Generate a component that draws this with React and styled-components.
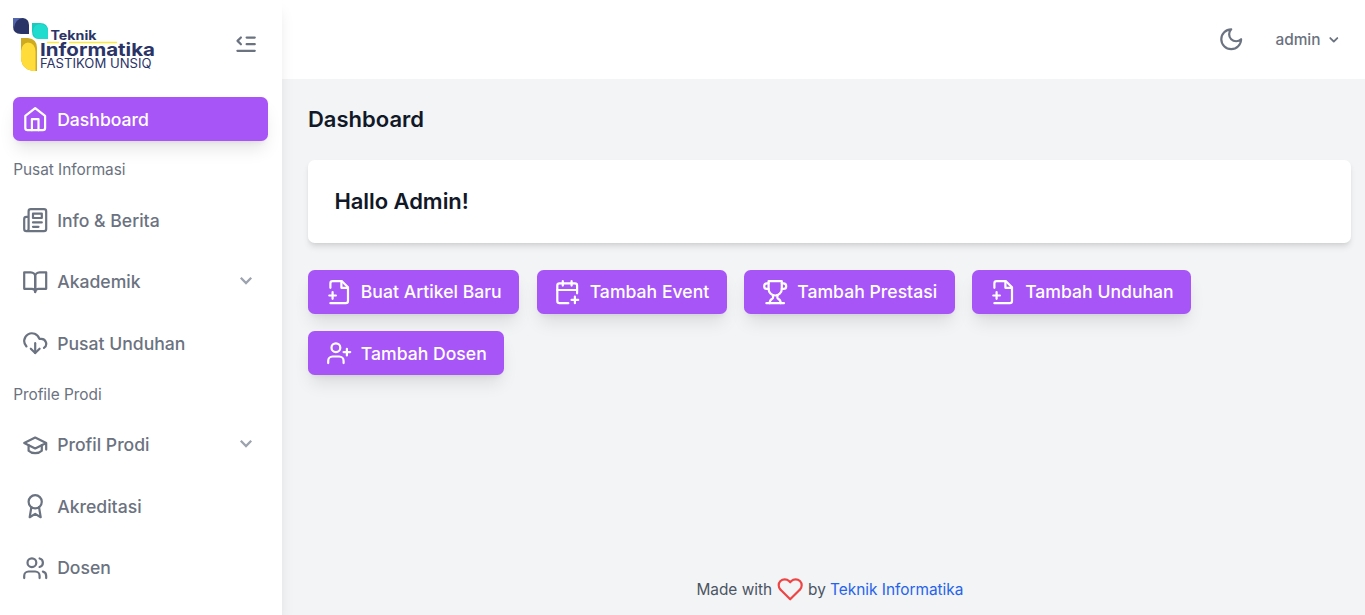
import React from "react";
import styled, { createGlobalStyle } from "styled-components";

const GlobalStyle = createGlobalStyle`
  *, *::before, *::after { box-sizing: border-box; }
  html { font-size: 17.6px; }
  body {
    margin: 0;
    overflow: hidden;
    background: #f3f4f6;
    color: #111827;
    font-family: Inter, "Liberation Sans", sans-serif;
    line-height: 1.5;
  }
  h2, h3 { margin: 0; }
`;

const Page = styled.div`
  display: flex;
  height: 100vh;
  overflow: hidden;
`;

const Sidebar = styled.aside`
  position: relative;
  z-index: 1;
  flex: none;
  width: 16rem;
  padding: 1rem 0.75rem;
  background: #fff;
  box-shadow: 0 10px 15px -3px rgba(0, 0, 0, 0.1), 0 4px 6px -4px rgba(0, 0, 0, 0.1);
`;

const SidebarHeader = styled.div`
  display: flex;
  align-items: center;
  justify-content: space-between;
  height: 54px;
  padding-right: 9px;
  margin-bottom: 25.6px;
  color: #6b7280;
`;

const Nav = styled.nav`
  display: flex;
  flex-direction: column;
  gap: 1rem;
`;

const NavLabel = styled.div`
  height: 1.25rem;
  padding-top: 0.4px;
  font-size: 0.875rem;
  line-height: 1.25rem;
  letter-spacing: -0.03px;
  color: #6b7280;
`;

const NavText = styled.span`
  padding-top: 1.15px;
`;

const NavItem = styled.a`
  display: flex;
  align-items: center;
  gap: 0.5rem;
  height: 2.5rem;
  padding: 0.5rem;
  border-radius: 0.375rem;
  font-weight: 500;
  color: ${(p) => (p.$active ? "#fff" : "#6b7280")};
  background: ${(p) => (p.$active ? "#a855f7" : "transparent")};
  box-shadow: ${(p) =>
    p.$active ? "0 11px 16.5px -3.3px rgba(0,0,0,.1), 0 4.4px 6.6px -4.4px rgba(0,0,0,.1)" : "none"};
`;

const ItemArrow = styled.svg`
  width: 14px;
  height: 10px;
  margin: 0 6.5px 2px auto;
`;

const Content = styled.div`
  display: flex;
  flex: 1;
  flex-direction: column;
  min-width: 0;
`;

const Topbar = styled.header`
  display: flex;
  align-items: center;
  justify-content: flex-end;
  height: 4.5rem;
  padding: 0 1.28rem;
  background: #fff;
  color: #6b7280;
`;

const UserMenu = styled.button`
  display: flex;
  align-items: center;
  gap: 0.25rem;
  margin-left: 1.74rem;
  padding: 0;
  border: 0;
  background: none;
  color: #6b7280;
  font: 500 0.875rem/1.25rem Inter, sans-serif;
`;

const Main = styled.main`
  flex: 1;
  display: flex;
  flex-direction: column;
  gap: 1.5rem;
  padding: 26.7px 0.8rem 0 1.5rem;
`;

const PageTitle = styled.h2`
  font-size: 1.25rem;
  line-height: 1.25;
  font-weight: 600;
`;

const Card = styled.section`
  padding: 1.5rem;
  border-radius: 0.375rem;
  background: #fff;
  box-shadow: 0 4.4px 6.6px -1.1px rgba(0, 0, 0, 0.1), 0 2.2px 4.4px -2.2px rgba(0, 0, 0, 0.1);
`;

const CardTitle = styled.h3`
  font-size: 1.25rem;
  line-height: 1.75rem;
  font-weight: 600;
  letter-spacing: -0.05px;
`;

const Actions = styled.div`
  display: flex;
  flex-wrap: wrap;
  gap: 1rem;
  max-width: 960px;
`;

const ActionButton = styled.button`
  display: inline-flex;
  align-items: center;
  gap: 0.5rem;
  height: 2.5rem;
  padding: 0.5rem 1rem;
  border: 0;
  border-radius: 0.375rem;
  background: #a855f7;
  color: #fff;
  font: 500 1rem/1.5rem Inter, sans-serif;
  letter-spacing: 0.016px;
  white-space: nowrap;
  box-shadow: 0 11px 16.5px -3.3px rgba(0, 0, 0, 0.1), 0 4.4px 6.6px -4.4px rgba(0, 0, 0, 0.1);
`;

const ActionLabel = styled.span`
  padding-top: 0.8px;
`;

const Footer = styled.footer`
  display: flex;
  align-items: center;
  justify-content: center;
  gap: 4.8px;
  padding: 0 0.75rem 12.6px 1.5rem;
  font-size: 0.875rem;
  letter-spacing: -0.01px;
  color: #4b5563;
`;

const FooterLink = styled.a`
  color: #2563eb;
`;

const IconSvg = styled.svg`
  flex: none;
  width: 1.5rem;
  height: 1.5rem;
  fill: none;
  stroke: ${(p) => p.$color || "currentColor"};
  stroke-width: 2;
  stroke-linecap: round;
  stroke-linejoin: round;
`;

const icons = {
  home: ["m3 9 9-7 9 7v11a2 2 0 0 1-2 2H5a2 2 0 0 1-2-2z", "M9 22V12h6v10"],
  news: [
    "M4 22h16a2 2 0 0 0 2-2V4a2 2 0 0 0-2-2H8a2 2 0 0 0-2 2v16a2 2 0 0 1-2 2Zm0 0a2 2 0 0 1-2-2v-9c0-1.1.9-2 2-2h2",
    "M18 14h-8M15 18h-5M10 6h8v4h-8V6Z",
  ],
  book: ["M2 3h6a4 4 0 0 1 4 4v14a3 3 0 0 0-3-3H2z", "M22 3h-6a4 4 0 0 0-4 4v14a3 3 0 0 1 3-3h7z"],
  cloud: ["M4 14.899A7 7 0 1 1 15.71 8h1.79a4.5 4.5 0 0 1 2.5 8.242", "M12 12v9", "m8 17 4 4 4-4"],
  cap: ["M22 10v6M2 10l10-5 10 5-10 5z", "M6 12v5c3 3 9 3 12 0v-5"],
  award: ["M18 8A6 6 0 1 1 6 8a6 6 0 0 1 12 0Z", "M15.477 12.89 17 22l-5-3-5 3 1.523-9.11"],
  users: [
    "M16 21v-2a4 4 0 0 0-4-4H6a4 4 0 0 0-4 4v2",
    "M13 7a4 4 0 1 1-8 0 4 4 0 0 1 8 0Z",
    "M22 21v-2a4 4 0 0 0-3-3.87",
    "M16 3.13a4 4 0 0 1 0 7.75",
  ],
  filePlus: ["M4 22h14a2 2 0 0 0 2-2V7.5L14.5 2H6a2 2 0 0 0-2 2v4", "M14 2v6h6", "M3 15h6M6 12v6"],
  calendar: ["M21 13V6a2 2 0 0 0-2-2H5a2 2 0 0 0-2 2v14c0 1.1.9 2 2 2h8", "M16 2v4M8 2v4M3 10h18M19 16v6M16 19h6"],
  trophy: [
    "M6 9H4.5a2.5 2.5 0 0 1 0-5H6M18 9h1.5a2.5 2.5 0 0 0 0-5H18M4 22h16",
    "M10 14.66V17c0 .55-.47.98-.97 1.21C7.85 18.75 7 20.24 7 22",
    "M14 14.66V17c0 .55.47.98.97 1.21C16.15 18.75 17 20.24 17 22",
    "M18 2H6v7a6 6 0 0 0 12 0V2Z",
  ],
  userPlus: ["M16 21v-2a4 4 0 0 0-4-4H6a4 4 0 0 0-4 4v2", "M13 7a4 4 0 1 1-8 0 4 4 0 0 1 8 0Z", "M19 8v6M22 11h-6"],
  moon: ["M12 3a6 6 0 0 0 9 9 9 9 0 1 1-9-9Z"],
  heart: [
    "M20.84 4.61a5.5 5.5 0 0 0-7.78 0L12 5.67l-1.06-1.06a5.5 5.5 0 0 0-7.78 7.78l1.06 1.06L12 21.23l7.78-7.78 1.06-1.06a5.5 5.5 0 0 0 0-7.78z",
  ],
  fold: ["M7.2 5.9 4.1 9l3.1 3.1", "M12.4 6h7.4M12.4 12h7.4M4 18h15.8"],
};

function Icon({ name, color }) {
  return (
    <IconSvg viewBox="0 0 24 24" $color={color}>
      {icons[name].map((d) => (
        <path key={d} d={d} />
      ))}
    </IconSvg>
  );
}

function Logo() {
  return (
    <svg width="142" height="54" viewBox="0 0 142 54" fontFamily="Inter, sans-serif" fill="#2b3467">
      <path d="M0 0h10q6 1 6 7v9H8Q0 16 0 8Z" fill="#2b3467" />
      <path d="M0 0h10Q2 1 1 10L0 8Z" fill="#5366ad" />
      <path d="M19 5h8q8 0 8 8v8h-9q-7 0-7-8Z" fill="#1cc9bd" />
      <path d="M20 13q1-7 8-7 7 1 7 8v7h-8q-7-1-7-8Z" fill="#20dccf" />
      <path d="M8 20h7q9 1 9 10v23h-4Q8 51 8 39Z" fill="#ceaa20" />
      <path d="M8 33q1-8 7-8.5 7 .5 7.500 9V53H20Q8 51 8 39Z" fill="#ffdc39" />
      <path d="M34 24.5h12M56 24.5h48" stroke="#ffe83e" strokeWidth="1.5" />
      <text x="37.5" y="21.6" fontSize="12.8" fontWeight="700" textLength="46" lengthAdjust="spacingAndGlyphs">Teknik</text>
      <text x="27" y="38" fontSize="18" fontWeight="700" textLength="115" lengthAdjust="spacingAndGlyphs">Informatika</text>
      <text x="27" y="49.8" fontSize="12.6" fontWeight="400" textLength="111.5" lengthAdjust="spacingAndGlyphs">FASTIKOM UNSIQ</text>
    </svg>
  );
}

function Item({ icon, children, active, expandable }) {
  return (
    <NavItem $active={active}>
      <Icon name={icon} />
      <NavText>{children}</NavText>
      {expandable && (
        <ItemArrow viewBox="0 0 14 10">
          <path d="m1.8 1.8 5.2 5.2 5.2-5.2" fill="none" stroke="#9ca3af" strokeWidth="2.3" />
        </ItemArrow>
      )}
    </NavItem>
  );
}

const actions = [
  ["filePlus", "Buat Artikel Baru"],
  ["calendar", "Tambah Event"],
  ["trophy", "Tambah Prestasi"],
  ["filePlus", "Tambah Unduhan"],
  ["userPlus", "Tambah Dosen"],
];

export default function App() {
  return (
    <Page>
      <GlobalStyle />
      <Sidebar>
        <SidebarHeader>
          <Logo />
          <Icon name="fold" />
        </SidebarHeader>
        <Nav>
          <Item icon="home" active>Dashboard</Item>
          <NavLabel>Pusat Informasi</NavLabel>
          <Item icon="news">Info &amp; Berita</Item>
          <Item icon="book" expandable>Akademik</Item>
          <Item icon="cloud">Pusat Unduhan</Item>
          <NavLabel>Profile Prodi</NavLabel>
          <Item icon="cap" expandable>Profil Prodi</Item>
          <Item icon="award">Akreditasi</Item>
          <Item icon="users">Dosen</Item>
        </Nav>
      </Sidebar>
      <Content>
        <Topbar>
          <Icon name="moon" />
          <UserMenu>
            admin
            <svg width="17.6" height="17.6" viewBox="0 0 20 20" fill="currentColor">
              <path d="M5.293 7.293a1 1 0 0 1 1.414 0L10 10.586l3.293-3.293a1 1 0 1 1 1.414 1.414l-4 4a1 1 0 0 1-1.414 0l-4-4a1 1 0 0 1 0-1.414z" />
            </svg>
          </UserMenu>
        </Topbar>
        <Main>
          <PageTitle>Dashboard</PageTitle>
          <Card>
            <CardTitle>Hallo Admin!</CardTitle>
          </Card>
          <Actions>
            {actions.map(([icon, label]) => (
              <ActionButton key={label}>
                <Icon name={icon} />
                <ActionLabel>{label}</ActionLabel>
              </ActionButton>
            ))}
          </Actions>
        </Main>
        <Footer>
          <span>Made with</span>
          <Icon name="heart" color="#ef4444" />
          <span>by <FooterLink>Teknik Informatika</FooterLink></span>
        </Footer>
      </Content>
    </Page>
  );
}
